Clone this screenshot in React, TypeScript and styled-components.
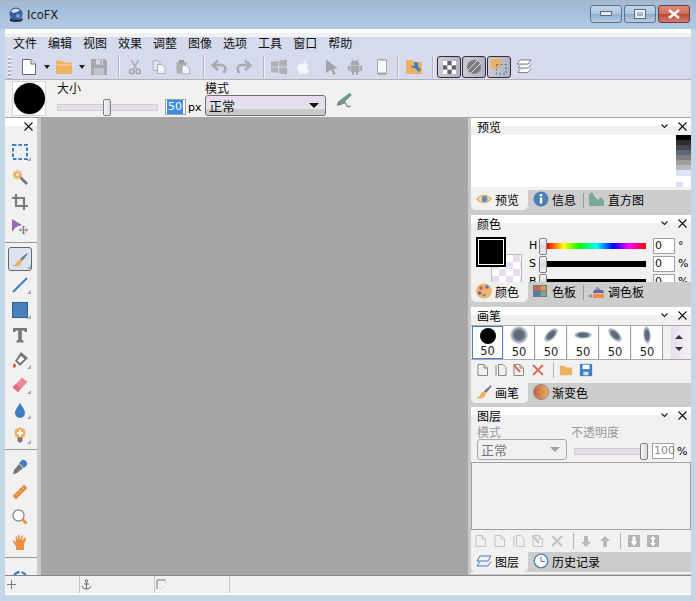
import React from 'react'
import styled, { createGlobalStyle } from 'styled-components'
import { FaApple } from 'react-icons/fa'

const GlobalStyle = createGlobalStyle`
  html, body { margin: 0; padding: 0; background: #c5d5ea; }
  body { font-family: "Noto Sans CJK SC", "DejaVu Sans", sans-serif; font-size: 12px; color: #000; }
`

const CHECKER = `repeating-conic-gradient(#e8dcf0 0 25%, #ffffff 0 50%)`

const Shell = styled.div`
  width: 696px;
  height: 601px;
  box-sizing: border-box;
  border-top: 1px solid #b4b4b4;
  background: linear-gradient(#9fbad8, #b3c9e2 28px, #c5d5ea 29px);
  display: flex;
  flex-direction: column;
  overflow: hidden;
`
const TitleBar = styled.div`
  height: 28px;
  flex: none;
  display: flex;
  align-items: center;
  padding: 0 6px 0 8px;
`
const TitleText = styled.span`
  margin-left: 3px;
  font: 11.5px "DejaVu Sans", sans-serif;
  color: #1c1c1c;
  flex: 1;
`
const CaptionButton = styled.div<{ $close?: boolean }>`
  width: 30px;
  height: 16px;
  margin-left: 2px;
  border: 1px solid ${(p) => (p.$close ? '#6b3a3a' : '#5d7086')};
  border-radius: 3px;
  box-sizing: content-box;
  display: flex;
  align-items: center;
  justify-content: center;
  background: ${(p) =>
    p.$close
      ? 'linear-gradient(#e08a78, #cf6f5c 50%, #bb4a36 52%, #d47a68)'
      : 'linear-gradient(#c6d7ea, #adc5de 50%, #8eaccd 52%, #b7cde4)'};
  margin-bottom: 3px;
`
const Client = styled.div`
  margin: 0 5px 6px;
  flex: 1;
  min-height: 0;
  display: flex;
  flex-direction: column;
  background: #f0f0f0;
`
const MenuBar = styled.div`
  height: 21px;
  flex: none;
  box-sizing: border-box;
  display: flex;
  align-items: center;
  gap: 11px;
  padding: 7px 0 0 8px;
  background: linear-gradient(#ffffff 4px, #f1f1f1 4px, #f1f1f1 8px, #d5dbed 8px);
`
const MenuItem = styled.span`
  font-size: 12px;
  line-height: 14px;
  color: #111;
`
const ToolStrip = styled.div`
  height: 30px;
  flex: none;
  box-sizing: border-box;
  display: flex;
  align-items: center;
  background: #d5dbed;
  border-bottom: 1px solid #b2b2b2;
  padding: 5px 0 0 3px;
`
const Gripper = styled.div`
  width: 3px;
  height: 23px;
  background: repeating-linear-gradient(#eef0f6 0 2px, #a8aec0 2px 4px);
`
const Slot = styled.div<{ $gap: number }>`
  margin-left: ${(p) => p.$gap}px;
  width: 16px;
  height: 18px;
  flex: none;
  display: flex;
  align-items: center;
  justify-content: center;
  color: #b4b4b4;
`
const DropArrow = styled.div<{ $gap: number }>`
  margin-left: ${(p) => p.$gap}px;
  width: 0;
  height: 0;
  border: 3.5px solid transparent;
  border-top: 4px solid #222;
  border-bottom: 0;
  flex: none;
`
const Separator = styled.div<{ $gap: number }>`
  margin-left: ${(p) => p.$gap}px;
  width: 1px;
  height: 22px;
  flex: none;
  background: #b2b5bf;
  box-shadow: 1px 0 0 #eef0f6;
`
const ToggleButton = styled.div<{ $gap: number }>`
  margin-left: ${(p) => p.$gap}px;
  width: 24px;
  height: 22px;
  flex: none;
  box-sizing: border-box;
  display: flex;
  align-items: center;
  justify-content: center;
  border: 1px solid #3f2730;
  border-radius: 3px;
  background: linear-gradient(90deg, #c9ccd8, #aeb3c4);
`
const OptionsBar = styled.div`
  height: 38px;
  flex: none;
  box-sizing: border-box;
  display: flex;
  background: #f1f1f1;
  border-bottom: 1px solid #a6a6a6;
`
const BrushSwatch = styled.div`
  margin: 1px 0 0 7px;
  width: 34px;
  height: 35px;
  flex: none;
  display: flex;
  align-items: center;
  justify-content: center;
  background: ${CHECKER};
  background-size: 22px 22px;
  border: 1px solid #d8d8d8;
  box-sizing: border-box;
`
const BrushDot = styled.div<{ $size: number }>`
  width: ${(p) => p.$size}px;
  height: ${(p) => p.$size}px;
  border-radius: 50%;
  background: #000;
  flex: none;
`
const SizeGroup = styled.div`
  margin-left: 11px;
  width: 148px;
  flex: none;
`
const FieldLabel = styled.div<{ $muted?: boolean }>`
  font-size: 12px;
  line-height: 15px;
  height: 15px;
  color: ${(p) => (p.$muted ? '#9a9a9a' : '#111')};
`
const SizeRow = styled.div`
  display: flex;
  align-items: center;
  height: 18px;
  margin-top: 3px;
`
const SliderTrack = styled.div<{ $width: number; $pos: number; $gap?: number }>`
  position: relative;
  width: ${(p) => p.$width}px;
  height: 5px;
  margin-left: ${(p) => p.$gap ?? 0}px;
  flex: none;
  background: #e8dcef;
  border: 1px solid #d0d0d0;
  box-sizing: content-box;
  &::after {
    content: '';
    position: absolute;
    left: ${(p) => p.$pos}px;
    top: -6px;
    width: 6px;
    height: 15px;
    background: linear-gradient(90deg, #f6f6f6, #d9d9e4);
    border: 1px solid #808080;
    border-radius: 2px;
  }
`
const NumberInput = styled.div<{ $width: number; $gap: number; $muted?: boolean }>`
  width: ${(p) => p.$width}px;
  height: 16px;
  margin-left: ${(p) => p.$gap}px;
  flex: none;
  box-sizing: border-box;
  border: 1px solid #a0a0a0;
  background: #fff;
  padding-left: 1px;
  font: 11px/14px "DejaVu Sans", sans-serif;
  color: ${(p) => (p.$muted ? '#8a8a8a' : '#111')};
`
const Selected = styled.span`
  display: inline-block;
  background: #3c8ce0;
  color: #fff;
  padding: 0 1px;
`
const Unit = styled.span<{ $gap: number }>`
  margin-left: ${(p) => p.$gap}px;
  font: 11px "DejaVu Sans", sans-serif;
`
const ModeGroup = styled.div`
  width: 121px;
  flex: none;
`
const SelectBox = styled.div<{ $disabled?: boolean; $width: number }>`
  width: ${(p) => p.$width}px;
  height: 21px;
  box-sizing: border-box;
  display: flex;
  align-items: center;
  justify-content: space-between;
  padding: 0 6px 0 3px;
  font-size: 13px;
  border: 1px solid ${(p) => (p.$disabled ? '#a8a8a8' : '#6e6e6e')};
  border-radius: 3px;
  color: ${(p) => (p.$disabled ? '#777' : '#111')};
  background: ${(p) =>
    p.$disabled ? '#f0f0f0' : 'linear-gradient(#e8dcee 0 30%, #dce0ef 30% 55%, #e6e6e6 55% 70%, #c9c9c9 70%)'};
`
const SelectArrow = styled.span<{ $disabled?: boolean }>`
  width: 0;
  height: 0;
  border: 5px solid transparent;
  border-top: 5px solid ${(p) => (p.$disabled ? '#a0a0a0' : '#111')};
  border-bottom: 0;
`
const OptionGlyph = styled.div`
  margin: 10px 0 0 9px;
  width: 18px;
  height: 18px;
  flex: none;
`
const Main = styled.div`
  flex: 1;
  min-height: 0;
  display: flex;
`
const ToolColumn = styled.div`
  width: 32px;
  flex: none;
  display: flex;
  flex-direction: column;
  overflow: hidden;
  background: #f1f1f1;
`
const ColumnHead = styled.div`
  height: 17px;
  flex: none;
  margin-bottom: 4px;
  background: linear-gradient(#fff 8px, #f1f1f1 8px);
  display: flex;
  align-items: center;
  justify-content: flex-end;
  padding-right: 4px;
`
const ToolRow = styled.div<{ $active?: boolean; $flyout?: boolean }>`
  position: relative;
  height: 25px;
  flex: none;
  display: flex;
  align-items: center;
  justify-content: center;
  padding-right: 2px;
  ${(p) =>
    p.$flyout &&
    `&::after {
      content: '';
      position: absolute;
      right: 6px;
      bottom: 3px;
      border: 2px solid transparent;
      border-right-color: #aaa;
      border-bottom-color: #aaa;
    }`}
  ${(p) =>
    p.$active &&
    `&::before {
      content: '';
      position: absolute;
      left: 3px;
      right: 5px;
      top: 0;
      bottom: 1px;
      border: 1px solid #666;
      border-radius: 3px;
      background: #dbe2f1;
    }`}
  svg { position: relative; z-index: 1; }
`
const ToolRule = styled.div<{ $top: number }>`
  height: 1px;
  flex: none;
  margin: ${(p) => p.$top}px 0 4px;
  background: #9a9a9a;
`
const Splitter = styled.div<{ $width: number }>`
  width: ${(p) => p.$width}px;
  flex: none;
  background: #cbcbcb;
`
const Canvas = styled.div`
  flex: 1;
  background: #a6a6a6;
`
const DockColumn = styled.div`
  width: 220px;
  flex: none;
  display: flex;
  flex-direction: column;
  background: #cdcdcd;
`
const Panel = styled.section<{ $height: number; $gap: number; $foot?: number }>`
  height: ${(p) => p.$height}px;
  margin-bottom: ${(p) => p.$gap}px;
  padding-bottom: ${(p) => p.$foot ?? 0}px;
  box-sizing: border-box;
  flex: none;
  display: flex;
  flex-direction: column;
  background: #f1f1f1;
  overflow: hidden;
`
const PanelHead = styled.header`
  height: 17px;
  flex: none;
  display: flex;
  align-items: center;
  padding: 0 4px 0 6px;
  background: linear-gradient(#fff 8px, #f0f0f0 8px);
`
const PanelTitle = styled.span`
  flex: 1;
  font-size: 12px;
  line-height: 14px;
  margin-top: 1px;
`
const PanelBody = styled.div`
  flex: 1;
  min-height: 0;
  overflow: hidden;
`
const TabStrip = styled.div`
  height: 20px;
  flex: none;
  display: flex;
  align-items: center;
  background: #cdcdcd;
`
const Tab = styled.div<{ $active?: boolean; $width?: number }>`
  height: 100%;
  width: ${(p) => (p.$width ? `${p.$width}px` : 'auto')};
  flex: none;
  box-sizing: border-box;
  display: flex;
  align-items: center;
  gap: 3px;
  padding: 0 0 2px 5px;
  font-size: 12px;
  background: ${(p) => (p.$active ? '#f1f1f1' : 'transparent')};
  border-radius: 0 0 5px 5px;
`
const TabRule = styled.div`
  width: 1px;
  height: 15px;
  flex: none;
  margin-left: 7px;
  background: #9a9a9a;
`
const PreviewArea = styled.div`
  height: 52px;
  display: flex;
  justify-content: flex-end;
  background: #fff;
`
const PaletteStrip = styled.div`
  width: 15px;
  display: flex;
  flex-direction: column;
`
const PaletteBand = styled.div<{ $color: string; $h: number; $w?: number }>`
  height: ${(p) => p.$h}px;
  width: ${(p) => p.$w ?? 15}px;
  background: ${(p) => p.$color};
`
const ColorBody = styled.div`
  display: flex;
  padding: 5px 0 0 5px;
`
const SwatchStack = styled.div`
  position: relative;
  width: 50px;
  height: 46px;
  flex: none;
`
const ForeSwatch = styled.div`
  position: relative;
  z-index: 1;
  width: 26px;
  height: 26px;
  background: #000;
  border: 2px solid #000;
  box-shadow: inset 0 0 0 1px #fff;
`
const BackSwatch = styled.div`
  position: absolute;
  left: 15px;
  top: 17px;
  width: 29px;
  height: 29px;
  border: 1px solid #bbb;
  background: ${CHECKER};
  background-size: 14px 14px;
`
const ChannelList = styled.div`
  margin-left: 3px;
  display: flex;
  flex-direction: column;
  gap: 1px;
`
const ChannelRow = styled.div`
  height: 17px;
  flex: none;
  display: flex;
  align-items: center;
`
const ChannelName = styled.span`
  width: 10px;
  font: 11px "DejaVu Sans", sans-serif;
  flex: none;
`
const ChannelBar = styled.div<{ $fill: string }>`
  position: relative;
  width: 99px;
  height: 6px;
  margin-left: 8px;
  flex: none;
  background: ${(p) => p.$fill};
  &::before {
    content: '';
    position: absolute;
    left: -8px;
    top: -5px;
    width: 6px;
    height: 15px;
    border: 1px solid #808080;
    border-radius: 2px;
    background: linear-gradient(#f6f6f6, #d9d9e4, #f0f0f0);
  }
`
const BrushGrid = styled.div`
  margin: 1px 0 0;
  height: 33px;
  display: flex;
  border-top: 1px solid #a8a8a8;
  border-bottom: 1px solid #a8a8a8;
  padding-left: 1px;
`
const BrushCell = styled.div<{ $selected?: boolean }>`
  width: 31px;
  flex: none;
  box-sizing: border-box;
  display: flex;
  flex-direction: column;
  align-items: center;
  justify-content: space-between;
  background: #fff;
  border-left: ${(p) => (p.$selected ? '1px solid #4a80c8' : '0')};
  border-right: 1px solid ${(p) => (p.$selected ? '#4a80c8' : '#a0a0a0')};
  border-top: ${(p) => (p.$selected ? '1px solid #4a80c8' : '0')};
  border-bottom: ${(p) => (p.$selected ? '1px solid #4a80c8' : '0')};
  margin-right: 1px;
`
const BrushLabel = styled.span`
  font: 11.5px/13px "DejaVu Sans", sans-serif;
  color: #222;
`
const BrushBlob = styled.div`
  height: 18px;
  display: flex;
  align-items: center;
`
const BrushScroll = styled.div`
  margin-left: 7px;
  width: 16px;
  flex: none;
  display: flex;
  flex-direction: column;
  align-items: center;
  justify-content: center;
  gap: 8px;
  background: linear-gradient(90deg, #e6dcef, #f2eef6);
`
const ScrollArrow = styled.span<{ $down?: boolean }>`
  width: 0;
  height: 0;
  border: 4px solid transparent;
  ${(p) => (p.$down ? 'border-top: 4px solid #333; border-bottom: 0;' : 'border-bottom: 4px solid #333; border-top: 0;')}
`
const IconRow = styled.div<{ $top: number }>`
  display: flex;
  align-items: center;
  height: 18px;
  margin-top: ${(p) => p.$top}px;
`
const IconRule = styled.div<{ $gap: number }>`
  width: 1px;
  height: 16px;
  margin-left: ${(p) => p.$gap}px;
  flex: none;
  background: #b4b4b4;
`
const LayerFields = styled.div`
  display: flex;
  height: 38px;
  padding-left: 6px;
`
const FieldColumn = styled.div<{ $width: number }>`
  width: ${(p) => p.$width}px;
  flex: none;
`
const OpacityRow = styled.div`
  display: flex;
  align-items: center;
  height: 16px;
  margin-top: 4px;
`
const LayerList = styled.div`
  height: 66px;
  border: 1px solid #a0a0a0;
`
const StatusBar = styled.footer`
  height: 20px;
  flex: none;
  box-sizing: border-box;
  display: flex;
  border-top: 1px solid #888;
  border-bottom: 2px solid #fff;
  background: #f1f1f1;
`
const StatusCell = styled.div<{ $width: number }>`
  width: ${(p) => p.$width}px;
  flex: none;
  box-sizing: border-box;
  display: flex;
  align-items: center;
  padding-left: 1px;
  border-right: 1px solid #c8c8c8;
`

/* icons, all drawn on a 16 unit grid */
type IconProps = { children: React.ReactNode; size?: number; box?: number }
const Ico = ({ children, size = 16, box = 16 }: IconProps) => (
  <svg width={size} height={size} viewBox={`0 0 ${box} ${box}`} style={{ flex: 'none', display: 'block' }}>
    {children}
  </svg>
)

const CloseX = () => (
  <svg width="9" height="9" viewBox="0 0 9 9" style={{ flex: 'none' }}>
    <path d="M0.5 0.5L8.5 8.5M8.5 0.5L0.5 8.5" stroke="#111" strokeWidth="1.1" />
  </svg>
)
const Caret = () => (
  <svg width="7" height="5" viewBox="0 0 7 5" style={{ flex: 'none', marginRight: 10 }}>
    <path d="M0.5 0.5L3.5 3.5L6.5 0.5" stroke="#222" fill="none" strokeWidth="1.2" />
  </svg>
)
const PanelControls = () => (
  <>
    <Caret />
    <CloseX />
  </>
)
const AppLogo = () => (
  <Ico>
    <circle cx="8" cy="7" r="6.5" fill="#3a5f98" />
    <path d="M3 4Q7 0 12 3Q9 6 5 6Z" fill="#cfe0f2" />
    <path d="M2 11Q8 15 15 11L14 14Q8 16 2 14Z" fill="#1d2b46" />
    <circle cx="10" cy="9" r="2" fill="#7c9fd0" />
  </Ico>
)
const NewDoc = () => (
  <Ico>
    <path d="M1.5 0.5H10L14.5 5V15.5H1.5Z" fill="#fff" stroke="#6a6a6a" />
    <path d="M10 0.5V5H14.5" fill="#eee" stroke="#6a6a6a" />
  </Ico>
)
const Folder = () => (
  <Ico>
    <path d="M0 1.5H6L8 3.5H16V15H0Z" fill="#eeb062" />
    <path d="M1 6H15" stroke="#f8dcb4" />
  </Ico>
)
const Floppy = () => (
  <Ico>
    <path d="M0 0H14L16 2V16H0Z" fill="#a8a8ad" />
    <rect x="5" y="0.5" width="7" height="5" fill="#d5dbed" />
    <rect x="9" y="1.5" width="2" height="3" fill="#a8a8ad" />
    <rect x="3" y="9" width="10" height="7" fill="#bfc2cc" />
  </Ico>
)
const Scissors = () => (
  <Ico>
    <path d="M4.5 1L9.5 10M11.5 1L6.5 10" stroke="#b2b2b2" strokeWidth="1.7" />
    <circle cx="4.8" cy="12.5" r="2.2" fill="none" stroke="#a8a8a8" strokeWidth="1.6" />
    <circle cx="11.2" cy="12.5" r="2.2" fill="none" stroke="#a8a8a8" strokeWidth="1.6" />
  </Ico>
)
const CopyIcon = ({ c = '#b0b0b0' }: { c?: string }) => (
  <Ico>
    <path d="M2 1.5H7L9 3.5V11.5H2Z" fill="#dfe2ec" stroke={c} />
    <path d="M6.5 5.5H11L14 8.5V14.5H6.5Z" fill="#f2f3f7" stroke={c} />
  </Ico>
)
const PasteIcon = () => (
  <Ico>
    <rect x="1.5" y="3" width="10" height="11.5" fill="#b0b0b0" />
    <rect x="4" y="1" width="5" height="3.5" fill="#9a9a9a" />
    <path d="M7 6.5H11.5L14.5 9.5V15H7Z" fill="#f2f3f7" stroke="#b0b0b0" />
  </Ico>
)
const UndoIcon = ({ flip }: { flip?: boolean }) => (
  <Ico>
    <g transform={flip ? 'matrix(-1 0 0 1 16 0)' : undefined}>
      <path d="M3.5 6H10C13.5 6 15 8.5 14 11.5L12.8 14" fill="none" stroke="#a9abb2" strokeWidth="2.6" />
      <path d="M7 1.5L1.5 6.3L7 11" fill="none" stroke="#a9abb2" strokeWidth="2.6" />
    </g>
  </Ico>
)
const CursorIcon = () => (
  <Ico>
    <path d="M3 0.5L14.5 9L10 10L13 15L10.5 16L8 10.8L3 14Z" fill="#a2a4ab" />
  </Ico>
)
const WindowsIcon = () => (
  <Ico>
    <path d="M0 3L7.2 2V7.5H0ZM8.3 1.8L16 0.5V7.5H8.3ZM0 8.6H7.2V14L0 13ZM8.3 8.6H16V15.5L8.3 14.2Z" fill="#aeb0b6" />
  </Ico>
)
const AndroidIcon = () => (
  <Ico>
    <path d="M5 0.5L6 2.5M11 0.5L10 2.5" stroke="#a8a8a8" />
    <path d="M3.5 6C3.5 3 6 1.8 8 1.8C10 1.8 12.5 3 12.5 6Z" fill="#a8a8a8" />
    <rect x="3.5" y="6.6" width="9" height="6.6" rx="1" fill="#a8a8a8" />
    <rect x="0.8" y="6.6" width="2" height="5.6" rx="1" fill="#a8a8a8" />
    <rect x="13.2" y="6.6" width="2" height="5.6" rx="1" fill="#a8a8a8" />
    <rect x="5" y="12" width="2" height="4" rx="1" fill="#a8a8a8" />
    <rect x="9" y="12" width="2" height="4" rx="1" fill="#a8a8a8" />
  </Ico>
)
const PhoneIcon = () => (
  <Ico>
    <rect x="3" y="0" width="10" height="16" rx="2" fill="#a8a8a8" />
    <rect x="4" y="1.5" width="8" height="12" fill="#f6f7fa" />
  </Ico>
)
const WrenchFolder = () => (
  <Ico>
    <path d="M0 1H6L8 3H16V15H0Z" fill="#eeb062" />
    <path d="M8 3A3 3 0 0 1 12 7L15 11L13 13L9 9A3 3 0 0 1 5 6L7 7.5L8.5 6Z" fill="#3f7fc0" />
  </Ico>
)
const CheckerIcon = () => (
  <svg width="13" height="13" viewBox="0 0 12 12" style={{ flex: 'none' }}>
    <rect width="12" height="12" fill="#fff" />
    {[0, 4, 8].map((x) =>
      [0, 4, 8].map((y) => ((x + y) % 8 === 4 ? <rect key={`${x}${y}`} x={x} y={y} width="4" height="4" fill="#666" /> : null))
    )}
  </svg>
)
const StripedDisc = () => (
  <Ico>
    <circle cx="8" cy="8" r="7" fill="#7c7c7c" />
    <path d="M1 12L12 1M4 15L15 4" stroke="#d8dae4" strokeWidth="1" />
  </Ico>
)
const SelectionFolder = () => (
  <Ico>
    <rect x="0" y="0" width="10" height="10" fill="#eeb062" />
    <rect x="5.5" y="5.5" width="9.5" height="9.5" fill="none" stroke="#3f7fc0" strokeDasharray="2 2" />
  </Ico>
)
const LayersIcon = () => (
  <Ico>
    <path d="M4 1H15L12 5H1ZM4 6.5L2 9H12L15 5.5M4 10.5L2 13.5H12L15 9.5" fill="#fff" stroke="#777" strokeWidth="0.9" />
  </Ico>
)
const PickGlyph = () => (
  <Ico size={18}>
    <path d="M3 10L6 13L15 4.5L13 2.5Z" fill="#6f9d8a" />
    <path d="M3 10L1.5 14L6 13Z" fill="#777" />
    <path d="M7 12Q9 10 10 13T14 14" fill="none" stroke="#777" />
  </Ico>
)
const Marquee = () => (
  <Ico>
    <rect x="1" y="1" width="14" height="14" fill="none" stroke="#3f7fc0" strokeWidth="2" strokeDasharray="3.5 2" />
  </Ico>
)
const Wand = () => (
  <Ico>
    <path d="M7.5 7.5L15 15" stroke="#777" strokeWidth="2.8" />
    <path d="M5.5 0L6.5 3L9.5 1.5L8.5 4.5L11 5.5L8.5 7L9.5 10L6.5 8.5L5.5 11L4 8.5L1.5 10L2 7L0 5.5L2 4.5L1.5 1.5L4 3Z" fill="#eeb062" />
    <circle cx="5.5" cy="5.5" r="1.6" fill="#fbe8cf" />
  </Ico>
)
const Crop = () => (
  <Ico>
    <path d="M4 0V12H16M0 4H12V16" fill="none" stroke="#7b7b7b" strokeWidth="2.2" />
  </Ico>
)
const MovePick = () => (
  <Ico>
    <path d="M0 0L10 6L4 8L0 13Z" fill="#9c6bb8" />
    <path d="M11.5 7V15M7.5 11H15.5M10 8.5L11.5 7L13 8.5M10 13.5L11.5 15L13 13.5M9 9.5L7.5 11L9 12.5M14 9.5L15.5 11L14 12.5" stroke="#777" fill="none" />
  </Ico>
)
const BrushIcon = ({ size = 16 }: { size?: number }) => (
  <Ico size={size}>
    <path d="M15 1L8 7L10 9L15.5 2.5Z" fill="#777" />
    <path d="M7.5 7.5C5 8 5 10 3.5 12C2.5 13 1 13.5 0.5 14C3 15 9 15 10 9.5Z" fill="#eeb062" />
  </Ico>
)
const LineIcon = () => (
  <Ico>
    <path d="M1 15L15 1" stroke="#3f7fc0" strokeWidth="2" />
  </Ico>
)
const RectIcon = () => (
  <Ico>
    <rect x="0.5" y="0.5" width="15" height="15" fill="#4a80b8" stroke="#2f5f93" />
  </Ico>
)
const TextGlyph = () => (
  <Ico>
    <path d="M1 1H15V5H13L12 3.5H9.8V13L11.5 13.5V15.5H4.5V13.5L6.2 13V3.5H4L3 5H1Z" fill="#777" />
  </Ico>
)
const BucketIcon = () => (
  <Ico>
    <path d="M9 0L16 6L8 14L3 9Z" fill="#777" />
    <path d="M9 4L12.5 7L8 11L5.5 8.5Z" fill="#fff" />
    <path d="M2.5 11C1 13 0.5 14 1 15C2 16.3 4 15.5 4 14C4 13 3 12 2.5 11Z" fill="#d5573f" />
  </Ico>
)
const Eraser = () => (
  <Ico>
    <path d="M10 0.5L15.5 5L6 15L0.5 10.5Z" fill="#e88c96" />
    <path d="M0.5 10.5L4 7L9 11.5L6 15Z" fill="#e0707e" />
  </Ico>
)
const DropIcon = () => (
  <Ico>
    <path d="M8 0.5C9 4 13 7 13 11A5 5 0 0 1 3 11C3 7 7 4 8 0.5Z" fill="#3f7fc0" />
  </Ico>
)
const BulbIcon = () => (
  <Ico>
    <circle cx="8" cy="6" r="5.5" fill="#eeb062" />
    <path d="M8 3V9M5 6H11" stroke="#fff" strokeWidth="2" />
    <path d="M5.5 10.5H10.5V14L9 15.5H7L5.5 14Z" fill="#777" />
  </Ico>
)
const Dropper = () => (
  <Ico>
    <path d="M10 1C12 -0.5 16 3 15 6L12 9L7 4Z" fill="#3f7fc0" />
    <path d="M7 5L11 9L5 14L1 15.5L2 11Z" fill="#777" />
  </Ico>
)
const RulerIcon = () => (
  <Ico>
    <path d="M12 0.5L15.5 4L4 15.5L0.5 12Z" fill="#ea8f42" />
    <path d="M4 9.5L5.5 11M7 6.5L8.5 8M10 3.5L11.5 5" stroke="#f8d6b2" />
  </Ico>
)
const Magnifier = () => (
  <Ico>
    <circle cx="6.5" cy="6.5" r="5.5" fill="#fff" stroke="#8f8f96" strokeWidth="1.4" />
    <path d="M10.5 10.5L14.5 14.5" stroke="#ea8f42" strokeWidth="3" />
  </Ico>
)
const HandIcon = () => (
  <Ico>
    <path d="M4 16V12L1 8C0.5 7 1.5 6 2.5 7L4 8.5L3.5 3C3.5 2 5 2 5 3L6 6.5V1.5C6 0.5 7.5 0.5 7.5 1.5L8 6.5L9.5 2C10 1 11.5 1.5 11 2.5L10 7L12.5 4C13.3 3.2 14.5 4 14 5L12 10V16Z" fill="#ea8f42" />
  </Ico>
)
const RefreshArc = () => (
  <Ico>
    <path d="M2 9A6.5 6.5 0 0 1 14 9" fill="none" stroke="#3f7fc0" strokeWidth="2.4" strokeDasharray="7 2" />
  </Ico>
)
const EyeIcon = () => (
  <Ico>
    <path d="M1 8Q8 1 15 8Q8 15 1 8Z" fill="#fbe8cf" stroke="#eeb062" strokeWidth="1.5" />
    <circle cx="8.5" cy="8" r="3" fill="#5b8cc0" />
  </Ico>
)
const InfoIcon = () => (
  <Ico>
    <circle cx="8" cy="8" r="7.5" fill="#4a80b8" />
    <rect x="6.8" y="3" width="2.4" height="2.4" fill="#fff" />
    <rect x="6.8" y="6.5" width="2.4" height="6" fill="#fff" />
  </Ico>
)
const HistogramIcon = () => (
  <Ico>
    <path d="M0 15V3L3 1L6 6L9 9L12 6L15 10V15Z" fill="#7aa898" />
  </Ico>
)
const PaletteIcon = () => (
  <Ico>
    <ellipse cx="8" cy="8" rx="8" ry="7.5" fill="#edb56d" />
    <circle cx="11" cy="4" r="1.8" fill="#3f7fc0" />
    <circle cx="5" cy="5" r="1.8" fill="#c65a50" />
    <circle cx="3.5" cy="10" r="1.8" fill="#7f5aa8" />
    <circle cx="8" cy="12" r="1.6" fill="#6f9d8a" />
  </Ico>
)
const SwatchesIcon = () => (
  <Ico>
    <rect width="14" height="12" y="2" fill="#777" />
    <rect x="1" y="3" width="5.5" height="4.5" fill="#c96b50" />
    <rect x="7.5" y="3" width="5.5" height="4.5" fill="#e09a4a" />
    <rect x="1" y="8.5" width="5.5" height="4.5" fill="#4a80b8" />
    <rect x="7.5" y="8.5" width="5.5" height="4.5" fill="#7aa898" />
  </Ico>
)
const FanIcon = () => (
  <Ico>
    <path d="M7 1L1 10H15Z" fill="#cfd4de" />
    <path d="M8 3L4 10H15Z" fill="#7aa898" />
    <path d="M5 7L4 10H15L14 7Z" fill="#7f5aa8" />
    <rect x="4" y="11" width="11" height="4" fill="#ea8f42" />
    <circle cx="1.5" cy="13" r="1.2" fill="none" stroke="#777" />
  </Ico>
)
const GradientDisc = () => (
  <Ico>
    <defs>
      <linearGradient id="gd">
        <stop offset="0" stopColor="#c9603f" />
        <stop offset="1" stopColor="#f0b060" />
      </linearGradient>
    </defs>
    <circle cx="8" cy="8" r="7.5" fill="url(#gd)" stroke="#888" />
  </Ico>
)
const LayerTabIcon = () => (
  <Ico>
    <path d="M4 3H15L12 8H1ZM4 8.5L1 13H12L15 8.5" fill="none" stroke="#3f7fc0" />
  </Ico>
)
const ClockIcon = () => (
  <Ico>
    <circle cx="8" cy="8" r="6.8" fill="#fff" stroke="#4a80b8" strokeWidth="1.3" />
    <path d="M8 3.5V8.5H12" fill="none" stroke="#777" />
  </Ico>
)
const RedX = () => (
  <Ico size={14} box={14}>
    <path d="M2 2L12 12M12 2L2 12" stroke="#d8705c" strokeWidth="2" />
  </Ico>
)
const GrayX = () => (
  <Ico size={14} box={14}>
    <path d="M2 2L12 12M12 2L2 12" stroke="#c4c4c4" strokeWidth="2" />
  </Ico>
)
const SmallDoc = ({ c = '#888', mark }: { c?: string; mark?: string }) => (
  <Ico size={14} box={14}>
    <path d="M2 1.5H8L11.5 5V12.5H2Z" fill="none" stroke={c} />
    <path d="M8 1.5V5H11.5" fill="none" stroke={c} />
    {mark && <path d="M2 2L8 9" stroke={mark} strokeWidth="2" />}
  </Ico>
)
const TwinDoc = ({ c = '#888' }: { c?: string }) => (
  <Ico size={14} box={14}>
    <path d="M2 2V12.5M4.5 1.5H9L12 4.5V12.5H4.5Z" fill="none" stroke={c} />
  </Ico>
)
const Arrow = ({ up }: { up?: boolean }) => (
  <Ico size={14} box={14}>
    <path d={up ? 'M7 2L12 7H9V13H5V7H2Z' : 'M7 13L12 8H9V2H5V8H2Z'} fill="#b9b9b9" />
  </Ico>
)
const BoxArrow = ({ both }: { both?: boolean }) => (
  <Ico size={14} box={14}>
    <rect x="1" y="1" width="12" height="12" fill="#b4b4b4" />
    <path d={both ? 'M7 2L10 5H8V9H10L7 12L4 9H6V5H4Z' : 'M7 12L10.5 7.5H8.5V2.5H5.5V7.5H3.5Z'} fill="#fff" />
  </Ico>
)
const StatusCross = () => (
  <Ico size={11} box={11}>
    <path d="M5.5 1V10M1 5.5H10" stroke="#777" />
  </Ico>
)
const AnchorIcon = () => (
  <Ico size={11} box={11}>
    <circle cx="5.5" cy="1.8" r="1.2" fill="none" stroke="#666" />
    <path d="M5.5 3V10M3 5H8M1 7C1.5 9.5 4 10 5.5 10C7 10 9.5 9.5 10 7" fill="none" stroke="#666" />
  </Ico>
)
const CornerIcon = () => (
  <Ico size={11} box={11}>
    <path d="M1 10V1H10" fill="none" stroke="#777" />
    <path d="M4 9.5V10M7 7V7.5M9.5 3.5V4" stroke="#777" />
  </Ico>
)

const menus = ['文件', '编辑', '视图', '效果', '调整', '图像', '选项', '工具', '窗口', '帮助']
const bands: [string, number, number?][] = [
  ['#000000', 5],
  ['#2e2e2e', 5],
  ['#484848', 5],
  ['#5a6878', 5],
  ['#7f7f7f', 5],
  ['#9d9d9d', 5],
  ['#bababa', 5],
  ['#dde3f5', 6],
  ['#ffffff', 6],
  ['#e8dcf0', 5, 7],
]
const blobs = [
  <BrushDot key="0" $size={16} />,
  <Ico key="1" size={18}>
    <defs>
      <radialGradient id="soft">
        <stop offset="0.5" stopColor="#5d6a7c" />
        <stop offset="1" stopColor="#dfe3ee" />
      </radialGradient>
    </defs>
    <circle cx="8" cy="8" r="8" fill="url(#soft)" />
  </Ico>,
  <Ico key="2" size={18}>
    <ellipse cx="8" cy="8" rx="7.8" ry="4" transform="rotate(-45 8 8)" fill="url(#soft)" />
  </Ico>,
  <Ico key="3" size={18}>
    <ellipse cx="8" cy="8" rx="8" ry="3.4" fill="url(#soft)" />
  </Ico>,
  <Ico key="4" size={18}>
    <ellipse cx="8" cy="8" rx="7.8" ry="4" transform="rotate(45 8 8)" fill="url(#soft)" />
  </Ico>,
  <Ico key="5" size={18}>
    <ellipse cx="8" cy="8" rx="8" ry="3.4" transform="rotate(85 8 8)" fill="url(#soft)" />
  </Ico>,
]

export default function App() {
  return (
    <Shell>
      <GlobalStyle />
      <TitleBar>
        <AppLogo />
        <TitleText>IcoFX</TitleText>
        <CaptionButton>
          <svg width="12" height="6" viewBox="0 0 12 6"><rect x="0.5" y="0.5" width="11" height="4" fill="#e8eef6" stroke="#5a6b80" /></svg>
        </CaptionButton>
        <CaptionButton>
          <svg width="12" height="10" viewBox="0 0 12 10"><rect x="1.5" y="1.5" width="9" height="7" fill="none" stroke="#e8eef6" strokeWidth="3" /><rect x="0.5" y="0.5" width="11" height="9" fill="none" stroke="#5a6b80" /></svg>
        </CaptionButton>
        <CaptionButton $close>
          <svg width="14" height="10" viewBox="0 0 14 10"><path d="M2 1L12 9M12 1L2 9" stroke="#f4f4f4" strokeWidth="2.6" /></svg>
        </CaptionButton>
      </TitleBar>
      <Client>
        <MenuBar>
          {menus.map((m) => (
            <MenuItem key={m}>{m}</MenuItem>
          ))}
        </MenuBar>
        <ToolStrip>
          <Gripper />
          <Slot $gap={10}><NewDoc /></Slot>
          <DropArrow $gap={7} />
          <Slot $gap={6}><Folder /></Slot>
          <DropArrow $gap={7} />
          <Slot $gap={6}><Floppy /></Slot>
          <Separator $gap={11} />
          <Slot $gap={8}><Scissors /></Slot>
          <Slot $gap={8}><CopyIcon /></Slot>
          <Slot $gap={8}><PasteIcon /></Slot>
          <Separator $gap={12} />
          <Slot $gap={7}><UndoIcon /></Slot>
          <Slot $gap={9}><UndoIcon flip /></Slot>
          <Separator $gap={11} />
          <Slot $gap={7}><WindowsIcon /></Slot>
          <Slot $gap={8}><FaApple size={16} color="#f4f5f8" /></Slot>
          <Slot $gap={12}><CursorIcon /></Slot>
          <Slot $gap={8}><AndroidIcon /></Slot>
          <Slot $gap={11}><PhoneIcon /></Slot>
          <Separator $gap={7} />
          <Slot $gap={8}><WrenchFolder /></Slot>
          <Separator $gap={10} />
          <ToggleButton $gap={4}><CheckerIcon /></ToggleButton>
          <ToggleButton $gap={1}><StripedDisc /></ToggleButton>
          <ToggleButton $gap={1}><SelectionFolder /></ToggleButton>
          <Slot $gap={5}><LayersIcon /></Slot>
        </ToolStrip>
        <OptionsBar>
          <BrushSwatch><BrushDot $size={31} /></BrushSwatch>
          <SizeGroup>
            <FieldLabel>大小</FieldLabel>
            <SizeRow>
              <SliderTrack $width={99} $pos={45} />
              <NumberInput $width={21} $gap={7}><Selected>50</Selected></NumberInput>
              <Unit $gap={2}>px</Unit>
            </SizeRow>
          </SizeGroup>
          <ModeGroup>
            <FieldLabel>模式</FieldLabel>
            <SelectBox $width={121}>
              正常
              <SelectArrow />
            </SelectBox>
          </ModeGroup>
          <OptionGlyph><PickGlyph /></OptionGlyph>
        </OptionsBar>
        <Main>
          <ToolColumn>
            <ColumnHead><CloseX /></ColumnHead>
            <ToolRow $flyout><Marquee /></ToolRow>
            <ToolRow><Wand /></ToolRow>
            <ToolRow><Crop /></ToolRow>
            <ToolRow><MovePick /></ToolRow>
            <ToolRule $top={3} />
            <ToolRow $active $flyout><BrushIcon /></ToolRow>
            <ToolRow $flyout><LineIcon /></ToolRow>
            <ToolRow $flyout><RectIcon /></ToolRow>
            <ToolRow><TextGlyph /></ToolRow>
            <ToolRow $flyout><BucketIcon /></ToolRow>
            <ToolRow $flyout><Eraser /></ToolRow>
            <ToolRow $flyout><DropIcon /></ToolRow>
            <ToolRow $flyout><BulbIcon /></ToolRow>
            <ToolRule $top={2} />
            <ToolRow><Dropper /></ToolRow>
            <ToolRow><RulerIcon /></ToolRow>
            <ToolRow><Magnifier /></ToolRow>
            <ToolRow><HandIcon /></ToolRow>
            <ToolRule $top={3} />
            <ToolRow><RefreshArc /></ToolRow>
          </ToolColumn>
          <Splitter $width={4} />
          <Canvas />
          <Splitter $width={3} />
          <DockColumn>
            <Panel $height={92} $gap={5}>
              <PanelHead>
                <PanelTitle>预览</PanelTitle>
                <PanelControls />
              </PanelHead>
              <PanelBody>
                <PreviewArea>
                  <PaletteStrip>
                    {bands.map(([c, h, w], i) => (
                      <PaletteBand key={i} $color={c} $h={h} $w={w} />
                    ))}
                  </PaletteStrip>
                </PreviewArea>
              </PanelBody>
              <TabStrip>
                <Tab $active $width={57}><EyeIcon />预览</Tab>
                <Tab><InfoIcon />信息</Tab>
                <TabRule />
                <Tab><HistogramIcon />直方图</Tab>
              </TabStrip>
            </Panel>
            <Panel $height={87} $gap={5}>
              <PanelHead>
                <PanelTitle>颜色</PanelTitle>
                <PanelControls />
              </PanelHead>
              <PanelBody>
                <ColorBody>
                  <SwatchStack>
                    <ForeSwatch />
                    <BackSwatch />
                  </SwatchStack>
                  <ChannelList>
                    <ChannelRow>
                      <ChannelName>H</ChannelName>
                      <ChannelBar $fill="linear-gradient(90deg, #f00, #ff0 17%, #0f0 33%, #0ff 50%, #00f 67%, #f0f 83%, #f00)" />
                      <NumberInput $width={22} $gap={7}>0</NumberInput>
                      <Unit $gap={3}>°</Unit>
                    </ChannelRow>
                    <ChannelRow>
                      <ChannelName>S</ChannelName>
                      <ChannelBar $fill="#000" />
                      <NumberInput $width={22} $gap={7}>0</NumberInput>
                      <Unit $gap={3}>%</Unit>
                    </ChannelRow>
                    <ChannelRow>
                      <ChannelName>B</ChannelName>
                      <ChannelBar $fill="#000" />
                      <NumberInput $width={22} $gap={7}>0</NumberInput>
                      <Unit $gap={3}>%</Unit>
                    </ChannelRow>
                  </ChannelList>
                </ColorBody>
              </PanelBody>
              <TabStrip>
                <Tab $active $width={57}><PaletteIcon />颜色</Tab>
                <Tab><SwatchesIcon />色板</Tab>
                <TabRule />
                <Tab><FanIcon />调色板</Tab>
              </TabStrip>
            </Panel>
            <Panel $height={96} $gap={4}>
              <PanelHead>
                <PanelTitle>画笔</PanelTitle>
                <PanelControls />
              </PanelHead>
              <PanelBody>
                <BrushGrid>
                  {blobs.map((b, i) => (
                    <BrushCell key={i} $selected={i === 0}>
                      <BrushBlob>{b}</BrushBlob>
                      <BrushLabel>50</BrushLabel>
                    </BrushCell>
                  ))}
                  <BrushScroll>
                    <ScrollArrow />
                    <ScrollArrow $down />
                  </BrushScroll>
                </BrushGrid>
                <IconRow $top={1}>
                  <Slot $gap={4}><SmallDoc /></Slot>
                  <Slot $gap={2}><TwinDoc /></Slot>
                  <Slot $gap={2}><SmallDoc mark="#d8705c" /></Slot>
                  <Slot $gap={3}><RedX /></Slot>
                  <IconRule $gap={7} />
                  <Slot $gap={4}><Ico size={14}><path d="M1 3H6L8 5H15V14H1Z" fill="#eeb062" /></Ico></Slot>
                  <Slot $gap={4}><Ico size={14}><path d="M1 1H15V15H1Z" fill="#3f7fc0" /><rect x="4" y="2" width="8" height="5" fill="#fff" /><rect x="5" y="10" width="6" height="4" fill="#cfe0f2" /></Ico></Slot>
                </IconRow>
              </PanelBody>
              <TabStrip>
                <Tab $active $width={57}><BrushIcon />画笔</Tab>
                <Tab><GradientDisc />渐变色</Tab>
              </TabStrip>
            </Panel>
            <Panel $height={167} $gap={0} $foot={2}>
              <PanelHead>
                <PanelTitle>图层</PanelTitle>
                <PanelControls />
              </PanelHead>
              <PanelBody>
                <LayerFields>
                  <FieldColumn $width={94}>
                    <FieldLabel $muted>模式</FieldLabel>
                    <SelectBox $width={90} $disabled>
                      正常
                      <SelectArrow $disabled />
                    </SelectBox>
                  </FieldColumn>
                  <FieldColumn $width={112}>
                    <FieldLabel $muted>不透明度</FieldLabel>
                    <OpacityRow>
                      <SliderTrack $width={66} $pos={65} $gap={3} />
                      <NumberInput $width={22} $gap={10} $muted>100</NumberInput>
                      <Unit $gap={3}>%</Unit>
                    </OpacityRow>
                  </FieldColumn>
                </LayerFields>
                <LayerList />
                <IconRow $top={2}>
                  <Slot $gap={2}><SmallDoc c="#c4c4c4" /></Slot>
                  <Slot $gap={3}><SmallDoc c="#c4c4c4" /></Slot>
                  <Slot $gap={3}><TwinDoc c="#c4c4c4" /></Slot>
                  <Slot $gap={3}><SmallDoc c="#c4c4c4" mark="#c4c4c4" /></Slot>
                  <Slot $gap={3}><GrayX /></Slot>
                  <IconRule $gap={8} />
                  <Slot $gap={4}><Arrow /></Slot>
                  <Slot $gap={3}><Arrow up /></Slot>
                  <IconRule $gap={7} />
                  <Slot $gap={5}><BoxArrow /></Slot>
                  <Slot $gap={3}><BoxArrow both /></Slot>
                </IconRow>
              </PanelBody>
              <TabStrip>
                <Tab $active $width={57}><LayerTabIcon />图层</Tab>
                <Tab><ClockIcon />历史记录</Tab>
              </TabStrip>
            </Panel>
          </DockColumn>
        </Main>
        <StatusBar>
          <StatusCell $width={75}><StatusCross /></StatusCell>
          <StatusCell $width={75}><AnchorIcon /></StatusCell>
          <StatusCell $width={75}><CornerIcon /></StatusCell>
        </StatusBar>
      </Client>
    </Shell>
  )
}
